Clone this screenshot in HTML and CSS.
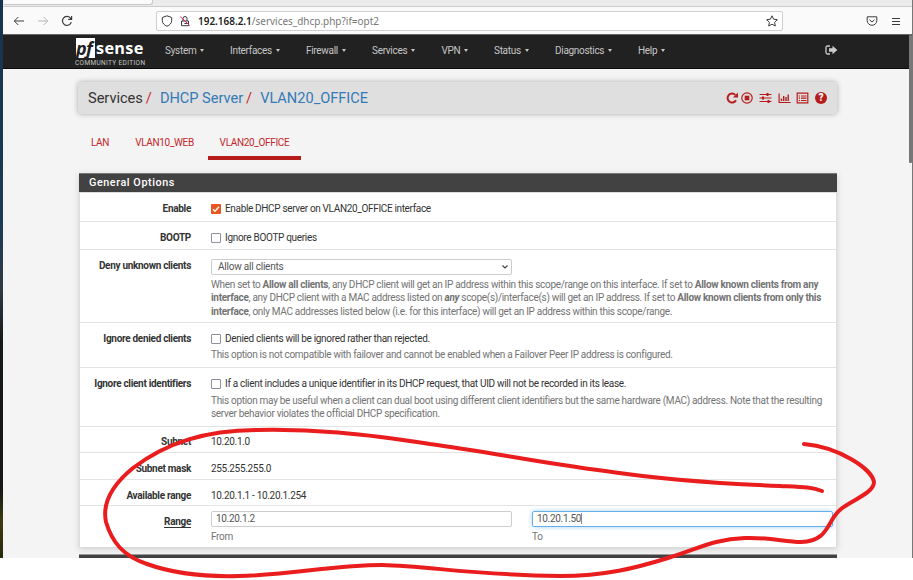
FILE: index.html
```html
<!DOCTYPE html>
<html lang="en">
<head>
<meta charset="utf-8">
<title>pfSense - Services: DHCP Server</title>
<link rel="stylesheet" href="styles.css">
</head>
<body>
<div class="screen">
  <div class="desktop"></div>
  <div class="browser">
    <div class="tabstrip"><div class="tab"></div></div>
    <div class="toolbar">
      <svg class="ti back" viewBox="0 0 12 12"><path d="M11 6H1.5M5.3 2L1.3 6l4 4"/></svg>
      <svg class="ti forward" viewBox="0 0 12 12"><path d="M1 6h9.500M6.700 2l4 4-4 4"/></svg>
      <svg class="ti reload" viewBox="0 0 12 12"><path d="M10.300 7.200A4.500 4.500 0 1 1 9.300 2.900L10.500 4.200M10.600 1v3.400H7.200"/></svg>
      <div class="url">
        <svg class="ti shield" viewBox="0 0 12 12"><path d="M6 .8L10.700 2.500V5.500C10.700 8.300 8.600 10.300 6 11.300C3.400 10.300 1.300 8.300 1.300 5.500V2.500Z"/></svg>
        <svg class="ti lock" viewBox="0 0 12 12"><path d="M2.500 6h7v4.700h-7zM4 6V3.500a2 2 0 0 1 4 0V6M5.500 8.500h3"/><path class="slash" d="M1.300 1.700l9.500 9"/></svg>
        <span class="address"><b>192.168.2.1</b>/services_dhcp.php?if=opt2</span>
        <svg class="ti star" viewBox="0 0 12 12"><path d="M6 .8l1.600 3.400 3.700.5-2.700 2.600.7 3.700L6 9.200 2.700 11l.7-3.700L.7 4.700l3.700-.5z"/></svg>
      </div>
      <svg class="ti pocket" viewBox="0 0 12 12"><path d="M1.200 1.800h9.600v3.700a4.800 4.800 0 0 1-9.600 0zM3.500 4.700L6 7l2.500-2.300"/></svg>
      <svg class="ti burger" viewBox="0 0 12 12"><path d="M2 3.500h8M2 6.500h8M2 9.500h8"/></svg>
    </div>
    <nav class="nav">
      <div class="brand">
        <div class="logo"><span class="pf">pf</span><span class="sense">sense</span></div>
        <div class="edition">COMMUNITY EDITION</div>
      </div>
      <div class="menu">
        <span>System</span><span>Interfaces</span><span>Firewall</span><span>Services</span><span>VPN</span><span>Status</span><span>Diagnostics</span><span>Help</span>
      </div>
      <svg class="logout" viewBox="0 0 13 10"><path class="door" d="M5 1H2.500Q1 1 1 2.500v5Q1 9 2.500 9H5"/><path class="arrow" d="M4 3.300h3.500V.7L12.300 5 7.500 9.300V6.700H4z"/></svg>
    </nav>
    <main class="page">
      <header class="crumbs">
        <div class="trail"><span>Services</span><i>/</i><a>DHCP Server</a><i>/</i><a>VLAN20_OFFICE</a></div>
        <div class="actions">
          <svg viewBox="0 0 12 12"><path class="thick" d="M10 8.300A4.500 4.500 0 1 1 9.300 2.900"/><path class="fill" d="M12 .6v4.900H7z"/></svg>
          <svg viewBox="0 0 12 12"><circle cx="6" cy="6" r="5.200"/><path class="fill" d="M3.700 3.700h4.600v4.600H3.700z"/></svg>
          <svg class="wide" viewBox="0 0 12 12"><path d="M0 2.500h12M0 6h12M0 9.500h12"/><path class="fill" d="M7 1h2v3H7zM2.500 4.500h2v3h-2zM8 8h2v3H8z"/></svg>
          <svg class="wide" viewBox="0 0 12 12"><path d="M.6 1.500v9H12"/><path class="bars" d="M3 9V6.500M5.200 9V4M7.500 9V5M9.700 9V2.500"/></svg>
          <svg class="wide" viewBox="0 0 12 12"><path d="M.7 1.200h10.600v9.600H.7z"/><path d="M2.200 4h1.300M4.500 4H10M2.200 6.200h1.300M4.500 6.200H10M2.200 8.500h1.300M4.500 8.500H10"/></svg>
          <span class="help-icon">?</span>
        </div>
      </header>
      <div class="tabs"><a class="t1">LAN</a><a class="t2">VLAN10_WEB</a><a class="t3 active">VLAN20_OFFICE</a></div>
      <section class="panel">
        <h2>General Options</h2>
        <div class="row r1"><label>Enable</label><div class="field"><div class="check"><span class="box on"><svg viewBox="0 0 10 10"><path d="M2 5.200l2 2L8 2.800"/></svg></span><span>Enable DHCP server on VLAN20_OFFICE interface</span></div></div></div>
        <div class="row r2"><label>BOOTP</label><div class="field"><div class="check"><span class="box"></span><span>Ignore BOOTP queries</span></div></div></div>
        <div class="row r3"><label>Deny unknown clients</label><div class="field"><div class="select"><span>Allow all clients</span><svg viewBox="0 0 8 6"><path d="M1.500 1.500L4 4l2.500-2.500"/></svg></div><p>When set to <b>Allow all clients</b>, any DHCP client will get an IP address within this scope/range on this interface. If set to <b>Allow known clients from any</b><br><b>interface</b>, any DHCP client with a MAC address listed on <b><em>any</em></b> scope(s)/interface(s) will get an IP address. If set to <b>Allow known clients from only this</b><br><b>interface</b>, only MAC addresses listed below (i.e. for this interface) will get an IP address within this scope/range.</p></div></div>
        <div class="row r4"><label>Ignore denied clients</label><div class="field"><div class="check"><span class="box"></span><span>Denied clients will be ignored rather than rejected.</span></div><p>This option is not compatible with failover and cannot be enabled when a Failover Peer IP address is configured.</p></div></div>
        <div class="row r5"><label>Ignore client identifiers</label><div class="field"><div class="check"><span class="box"></span><span>If a client includes a unique identifier in its DHCP request, that UID will not be recorded in its lease.</span></div><p>This option may be useful when a client can dual boot using different client identifiers but the same hardware (MAC) address. Note that the resulting<br>server behavior violates the official DHCP specification.</p></div></div>
        <div class="row r6"><label>Subnet</label><div class="field">10.20.1.0</div></div>
        <div class="row r7"><label>Subnet mask</label><div class="field">255.255.255.0</div></div>
        <div class="row r8"><label>Available range</label><div class="field">10.20.1.1 - 10.20.1.254</div></div>
        <div class="row r9"><label><u>Range</u></label><div class="field pair"><div><div class="input">10.20.1.2</div><p>From</p></div><div><div class="input focus">10.20.1.50<span class="caret"></span></div><p>To</p></div></div></div>
      </section>
      <div class="next-panel"></div>
    </main>
  </div>
  <div class="scrollbar"></div>
  <svg class="ink" viewBox="0 0 913 580"><path d="M822 491C812 487 802 487 780 486C728 484 665 480 605 471C540 463 490 452 430 444C360 433 312 429 258 430C205 430 166 443 133 468C111 486 102 503 106 522C112 542 123 556 147 564C172 573 205 577 239 576C290 575 335 565 382 565C430 566 470 575 560 576C605 576 636 568 668 558C698 549 713 539 745 538C769 537 785 542 801 542C830 541 826 521 841 509C852 500 874 493 874 482C872 469 839 447 804 444"/></svg>
</div>
</body>
</html>
```
FILE: styles.css
```css
* { box-sizing: border-box; }
body { margin: 0; background: #fff; font-family: Roboto, "Liberation Sans", sans-serif; font-size: 10px; color: #333; }
.screen { position: relative; display: flex; width: 913px; height: 580px; overflow: hidden; }
.desktop { width: 3px; height: 558px; background: linear-gradient(#18334d 0, #1c3a55 220px, #303a43 290px, #16191a 340px, #151815 490px, #3b3b12 520px, #29290e 558px); }
.browser { width: 910px; height: 558px; background: #f4f4f4; overflow: hidden; }
svg { fill: none; flex: none; display: block; }

.tabstrip { height: 7px; background: #ebebeb; border-bottom: 1px solid #ccc; }
.tab { width: 149px; height: 5px; margin-left: 1px; background: #fafafa; border: solid #c8c8c8; border-width: 0 1px 1px 0; border-radius: 0 0 3px; }
.toolbar { display: flex; align-items: center; height: 27px; background: #fafafa; }
.ti { width: 12px; height: 12px; stroke: #3b3b3f; stroke-width: 1; }
.back { margin-left: 10px; }
.forward { margin-left: 12px; stroke: #b5b5b7; }
.reload { margin-left: 12px; stroke-width: 1.200; }
.url { display: flex; align-items: center; width: 627px; height: 20px; margin-left: 83px; padding: 0 4px; background: #fff; border: 1px solid #cfcfd1; border-radius: 2px; }
.lock { margin-left: 6px; }
.slash { stroke: #e22850; }
.address { margin-left: 7px; padding-top: 1px; font-family: "Noto Sans", sans-serif; font-size: 9.950px; letter-spacing: .01px; color: #777; white-space: nowrap; }
.address b { font-weight: 600; color: #222; }
.star { margin-left: auto; }
.pocket { margin-left: 83px; }
.burger { margin-left: 12px; }

.nav { display: flex; height: 35px; background: #212121; border-top: 1px solid #666; border-bottom: 1px solid #0a0a0a; color: #c6c6c6; }
.brand { width: 74px; margin-left: 72px; padding-top: 3px; }
.logo { display: flex; height: 20px; color: #fff; font-family: "Open Sans", sans-serif; font-weight: 700; line-height: 20px; }
.pf { width: 19px; margin-left: 1px; background: #fff; color: #212121; font-size: 18px; font-style: italic; letter-spacing: -.6px; }
.sense { margin-left: 1px; font-size: 16.300px; letter-spacing: .3px; }
.edition { font-size: 6.500px; line-height: 10px; letter-spacing: .35px; white-space: nowrap; }
.menu { display: grid; grid-template-columns: 65px 76px 66px 69.500px 52.500px 61px 83px 50px; margin-left: 16px; line-height: 31px; letter-spacing: -.3px; }
.menu span { white-space: nowrap; }
.menu span::after { content: ""; display: inline-block; margin-left: 4px; vertical-align: 2px; border: solid transparent; border-width: 2.500px 2.500px 0; border-top-color: #c6c6c6; border-width: 3px 2.500px 0; }
.logout { width: 13px; height: 10px; margin: 10px 0 0 137px; }
.door { stroke: #ccc; stroke-width: 1.300; }
.arrow { fill: #ccc; }

.page { padding: 13px 0 0 76px; }
.crumbs { display: flex; justify-content: space-between; align-items: center; width: 759px; height: 32px; margin-left: -1px; padding: 0 10px; background: #dfdfdf; border-radius: 3px; box-shadow: 0 0 5px #aaa; }
.trail { font-size: 14.600px; letter-spacing: -.02px; white-space: nowrap; }
.trail i { margin: 0 8px 0 3px; color: #c9252b; font-style: normal; }
.trail a { color: #337ab7; }
.actions { display: flex; align-items: center; gap: 3px; }
.actions svg { width: 12px; height: 12px; stroke: #b71c1c; stroke-width: 1.200; }
.actions .wide { width: 13px; margin-left: 2.700px; }
.actions .thick { stroke-width: 2; }
.actions .bars { stroke-width: 1.400; }
.actions .fill { fill: #b71c1c; stroke: none; }
.help-icon { width: 12px; height: 12px; margin-left: 2.700px; border-radius: 50%; background: #b71c1c; color: #fff; font-size: 10px; font-weight: 900; line-height: 12px; text-align: center; }
.tabs { display: flex; height: 45px; margin-top: 14px; line-height: 29px; letter-spacing: -.33px; color: #c4262b; }
.tabs a { white-space: nowrap; text-align: center; }
.t1 { width: 42px; }
.t2 { width: 87px; }
.t3 { width: 93px; height: 32px; border-bottom: 4px solid #b71c1c; }

.panel { width: 758px; background: #fff; border: solid #ddd; border-width: 0 1px; box-shadow: 0 2px 6px #ccc; }
h2 { height: 20px; margin: 0 -1px; padding-left: 10px; border-top: 1px solid #777; border-bottom: 1px solid #ddd; background: #424242; color: #fff; font-size: 10.800px; font-weight: 500; line-height: 18px; letter-spacing: .57px; }
.row { display: grid; grid-template-columns: 111px 1fr; column-gap: 20px; border-bottom: 1px solid #e3e3e3; line-height: 13.300px; letter-spacing: -.31px; white-space: nowrap; }
.row label { text-align: right; font-weight: 700; }
.row > * { padding-top: 9px; }
.r6 > * { padding-top: 8px; }
.r1 .field { letter-spacing: -.34px; }
.row p { margin: 0; color: #737373; letter-spacing: -.305px; }
.check { display: flex; gap: 4px; height: 13px; }
.box { width: 10px; height: 10px; margin-top: 2px; border: 1.500px solid #8f8f9d; border-radius: 1px; background: #fff; }
.box.on { border: 0; background: #e95420; }
.box.on svg { width: 10px; height: 10px; stroke: #fff; stroke-width: 1.400; }
.r1 { height: 29px; }
.r2 { height: 28px; }
.r3 { height: 73px; }
.r4 { height: 45px; }
.r5 { height: 59px; }
.r6 { height: 26px; }
.r7 { height: 27px; }
.r8 { height: 26px; }
.r9 { height: 41px; border-bottom: 0; }
.select { display: flex; align-items: center; justify-content: space-between; width: 301px; height: 16px; margin-bottom: 3px; padding: 0 2px 0 6px; border: 1px solid #ccc; border-radius: 2px; color: #555; letter-spacing: -.22px; }
.select svg { width: 8px; height: 6px; stroke: #444; stroke-width: 1.200; }
.row.r4 p { margin-top: 2.500px; }
.row.r5 p { margin-top: 3.500px; }
.pair { display: grid; grid-template-columns: 301px 301px; column-gap: 20px; }
.row > .pair { padding-top: 5px; }
.input { display: flex; align-items: center; height: 16px; margin-bottom: 3px; padding: 0 4px 1px; border: 1px solid #ccc; border-radius: 2px; color: #555; }
.focus { border-color: #66afe9; box-shadow: 0 0 5px #a7d0f0; }
.caret { width: 1px; height: 11px; background: #888; }
.next-panel { width: 758px; height: 5px; margin-top: 7px; border-top: 1px solid #999; background: #424242; }
u { text-decoration: none; border-bottom: 1px solid #333; }
.scrollbar { position: absolute; right: 1px; top: 35px; width: 3px; height: 128px; border-radius: 1px; background: #777; }
.screen::after { content: ""; position: absolute; top: 0; right: 0; width: 1px; height: 558px; background: #777; }
.ink { position: absolute; inset: 0; width: 913px; height: 580px; stroke: #e91d1d; stroke-width: 4; stroke-linecap: round; stroke-linejoin: round; }
```
